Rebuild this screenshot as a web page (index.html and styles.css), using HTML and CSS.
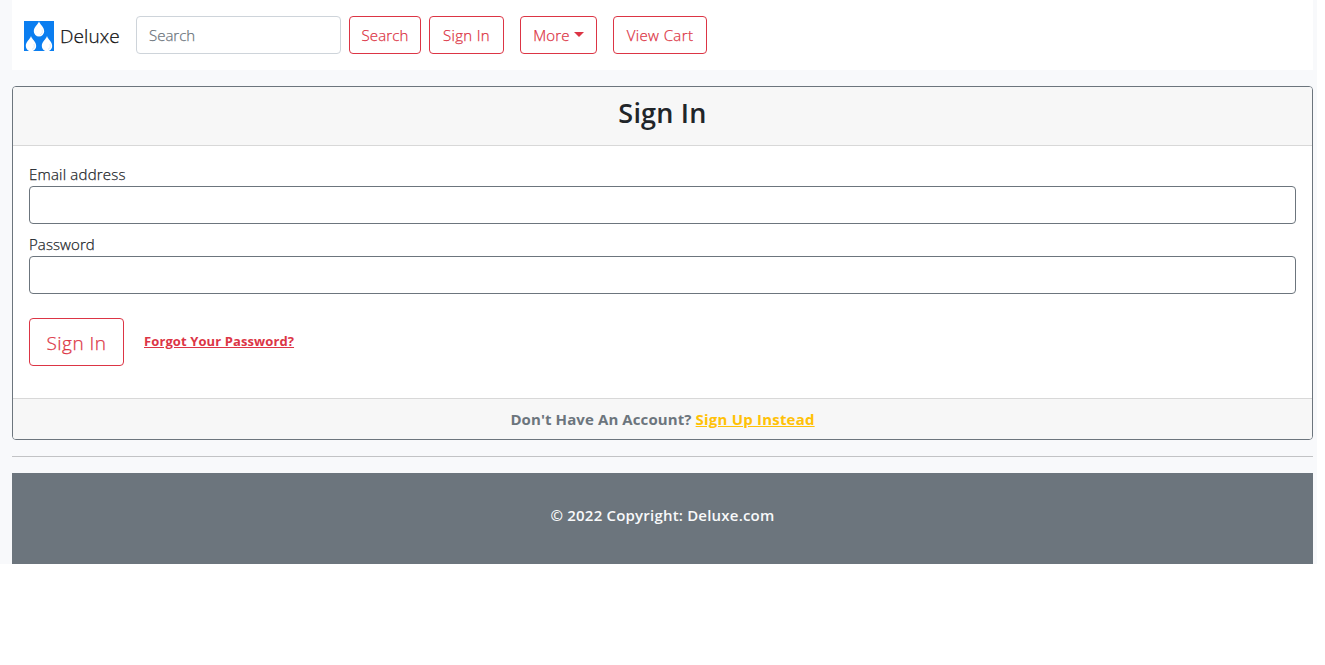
FILE: index.html
```
<!DOCTYPE html>
<html lang="en">
<head>
<meta charset="utf-8">
<title>Deluxe - Sign In</title>
<link rel="stylesheet" href="styles.css">
</head>
<body>
<div class="page">
  <nav class="navbar">
    <a class="brand" href="#">
      <svg class="logo" viewBox="0 0 30 30" aria-hidden="true">
        <rect width="30" height="30" fill="#0b7ef0"/>
        <g fill="#fff">
          <path d="M15 .3C14.200 3.500 9.800 6 9.800 10.300a5.200 5.300 0 0 0 10.400 0C20.200 6 15.800 3.500 15 .3Z"/>
          <path d="M7 15C6.200 18.200 1.800 20.700 1.800 25a5.200 5.300 0 0 0 10.400 0C12.200 20.700 7.800 18.200 7 15Z"/>
          <path d="M23 15C22.200 18.200 17.800 20.700 17.800 25a5.200 5.300 0 0 0 10.400 0C28.200 20.700 23.800 18.200 23 15Z"/>
        </g>
        <g fill="none" stroke="#d2e3f2" stroke-width=".8">
          <path d="M18 8.500q1.200 4-2 5.300"/>
          <path d="M10 23q1.200 4-2 5.300"/>
          <path d="M26 23q1.200 4-2 5.300"/>
        </g>
      </svg>
      <span class="brand-name">Deluxe</span>
    </a>
    <form class="search">
      <input class="control search-input" type="search" placeholder="Search">
      <button class="btn btn-search" type="button">Search</button>
    </form>
    <a class="btn btn-signin" href="#">Sign In</a>
    <a class="btn btn-more" href="#">More<span class="caret"></span></a>
    <a class="btn btn-cart" href="#">View Cart</a>
  </nav>
  <main class="card">
    <header class="card-header"><h1 class="title">Sign In</h1></header>
    <form class="card-body">
      <label class="label label-email" for="email">Email address</label>
      <input class="control field" id="email" type="email">
      <label class="label label-password" for="password">Password</label>
      <input class="control field" id="password" type="password">
      <div class="actions">
        <button class="btn btn-lg" type="button">Sign In</button>
        <a class="forgot" href="#">Forgot Your Password?</a>
      </div>
    </form>
    <footer class="card-footer"><span class="question">Don't Have An Account?</span><a class="signup" href="#">Sign Up Instead</a></footer>
  </main>
  <hr class="rule">
  <footer class="footer"><span class="copyright">© 2022 Copyright: Deluxe.com</span></footer>
</div>
</body>
</html>
```
FILE: styles.css
```
* { box-sizing: border-box; }
body {
  margin: 0;
  background: #fff;
  color: #212529;
  font-family: "Open Sans", "Noto Sans", sans-serif;
  font-size: 15px;
  line-height: 24px;
}
.page {
  width: 1317px;
  height: 564px;
  padding: 0 4px 0 12px;
  background: #f8f9fb;
}
.navbar {
  display: flex;
  align-items: center;
  height: 70px;
  padding: 0 12px;
  background: #fff;
}
.brand {
  display: flex;
  align-items: center;
  width: 96px;
  margin-right: 16px;
  gap: 6px;
  color: #111;
  text-decoration: none;
  white-space: nowrap;
}
.logo { width: 30px; height: 30px; flex: none; margin-top: 2px; }
.brand-name { font-size: 19px; font-weight: 300; margin-top: 1px; letter-spacing: .1px; }
.brand-name, .btn, .label, .search-input { -webkit-text-stroke: .25px currentColor; }
.search { display: flex; gap: 8px; margin-right: 8px; }
.control {
  display: block;
  height: 38px;
  padding: 6px 12px;
  border: 1px solid #6c757d;
  border-radius: 4px;
  background: #fff;
  color: #212529;
  font: inherit;
  outline: 0;
  appearance: none;
}
.search-input { width: 205px; border-color: #ced4da; color: #6c757d; font-weight: 300; }
.search-input::placeholder { color: #6c757d; opacity: 1; }
.btn {
  display: flex;
  align-items: center;
  justify-content: center;
  height: 38px;
  padding: 0;
  border: 1px solid #dc3545;
  border-radius: 4px;
  background: #fff;
  color: #dc3545;
  font: inherit;
  font-weight: 300;
  text-decoration: none;
  white-space: nowrap;
}
.btn-search { width: 72px; letter-spacing: .1px; }
.btn-signin { width: 75px; margin-right: 16px; letter-spacing: .3px; }
.btn-more { width: 77px; margin-right: 16px; letter-spacing: .2px; }
.btn-cart { width: 94px; letter-spacing: .4px; }
.caret {
  margin: -2px 0 0 4px;
  border-top: 5px solid #dc3545;
  border-right: 5px solid transparent;
  border-left: 5px solid transparent;
}
.card {
  height: 354px;
  margin-top: 16px;
  border: 1px solid #6c757d;
  border-radius: 4px;
  background: #fff;
  overflow: hidden;
}
.card-header {
  height: 59px;
  padding-top: 9px;
  border-bottom: 1px solid #d8d8d8;
  background: #f7f7f7;
  text-align: center;
}
.title { margin: 0; font-size: 27px; font-weight: 600; line-height: 34px; letter-spacing: .2px; }
.card-body { height: 252px; padding: 16px; }
.label { display: block; width: max-content; font-weight: 300; }
.label-email { letter-spacing: .2px; }
.label-password { letter-spacing: .1px; }
.field { width: 100%; margin-bottom: 8px; }
.actions { display: flex; align-items: center; gap: 20px; margin-top: 24px; }
.btn-lg { width: 95px; height: 48px; padding-top: 2px; font-size: 19px; letter-spacing: .5px; }
.forgot { color: #dc3545; font-size: 13px; font-weight: 700; margin-top: -2px; letter-spacing: .1px; white-space: nowrap; }
.card-footer {
  display: flex;
  justify-content: center;
  gap: 4px;
  height: 41px;
  padding-top: 8px;
  border-top: 1px solid #d8d8d8;
  background: #f7f7f7;
  color: #6c757d;
  font-weight: 700;
  letter-spacing: .1px;
}
.signup { color: #ffc107; letter-spacing: .2px; }
.rule { height: 1px; margin: 16px 0; border: 0; background: #c2c3c5; }
.footer {
  height: 91px;
  padding-top: 30px;
  background: #6c757d;
  color: #f8f9fa;
  font-weight: 600;
  letter-spacing: .2px;
  text-align: center;
}
```
